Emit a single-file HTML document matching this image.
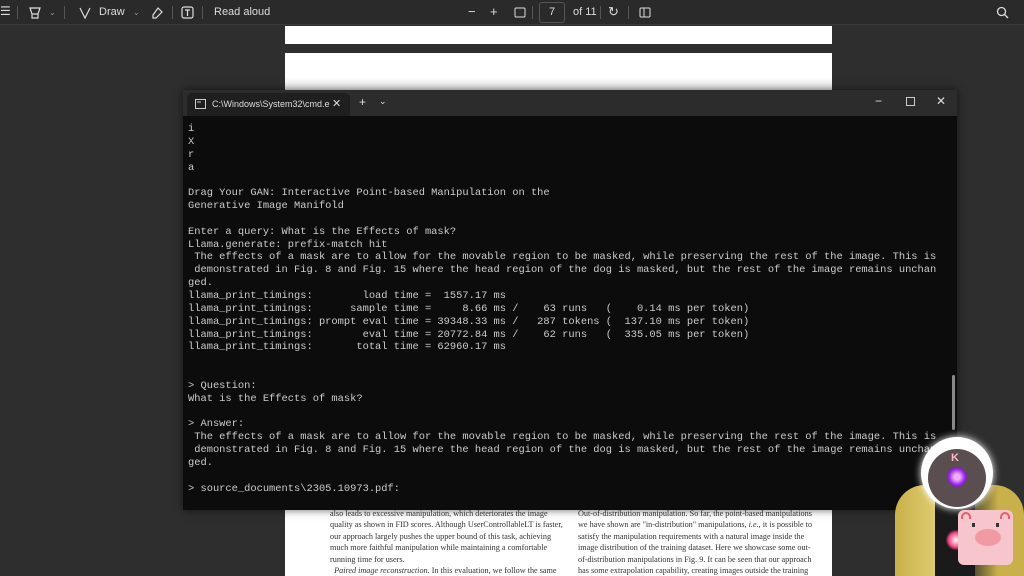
<!DOCTYPE html>
<html><head><meta charset="utf-8"><style>
*{margin:0;padding:0;box-sizing:border-box}
html,body{width:1024px;height:576px;overflow:hidden}
body{background:#2e2e2e;font-family:"Liberation Sans",sans-serif;position:relative}
.tb{position:absolute;left:0;top:0;width:1024px;height:25px;background:#2a2a2a;border-bottom:1px solid #3a3a3a;color:#ddd;font-size:11px}
.tb span{position:absolute;top:6px}
.sep{position:absolute;top:6px;width:1px;height:13px;background:#555}
.page{position:absolute;left:285px;width:547px;background:#fff;overflow:hidden}
.win{position:absolute;left:183px;top:90px;width:774px;height:420px;background:#0c0c0c;box-shadow:0 0 8px rgba(0,0,0,.6);overflow:hidden}
.title{height:26px;background:#2c2c2c;position:relative;color:#ddd;font-size:9px}
.tab{position:absolute;left:4px;top:3px;width:163px;height:23px;background:#1f1f1f;border-radius:5px 5px 0 0}
pre{font-family:"Liberation Mono",monospace;font-size:10.4px;line-height:12.85px;color:#cccccc;position:absolute;left:5px;top:33px}
.ptxt{font-family:"Liberation Serif",serif;font-size:8.2px;line-height:11.4px;color:#333;position:absolute}
</style></head><body>
<div class="tb">
<span style="left:0;font-size:12px;top:4px">☰</span><div class="sep" style="left:17px"></div>
<svg style="position:absolute;left:28px;top:6px" width="14" height="14" fill="none" stroke="#ddd" stroke-width="1.2"><path d="M2 2h10l-2 6H4z M4 8v4h6V8"/></svg>
<span style="left:49px;font-size:8px;top:8px;color:#999">⌄</span><div class="sep" style="left:64px"></div>
<svg style="position:absolute;left:78px;top:6px" width="14" height="14" fill="none" stroke="#ddd" stroke-width="1.2"><path d="M2 2l5 10 5-10"/></svg>
<span style="left:99px">Draw</span><span style="left:133px;font-size:8px;top:8px;color:#999">⌄</span>
<svg style="position:absolute;left:150px;top:6px" width="14" height="14" fill="none" stroke="#ddd" stroke-width="1.2"><path d="M8 2l4 4-6 6H3v-3z"/></svg>
<div class="sep" style="left:172px"></div>
<svg style="position:absolute;left:181px;top:6px" width="13" height="13" fill="none" stroke="#ddd" stroke-width="1.2"><rect x="1" y="1" width="11" height="11" rx="2"/><path d="M4 4h5M6.5 4v6"/></svg>
<div class="sep" style="left:202px"></div>
<span style="left:214px">Read aloud</span>
<span style="left:468px;top:4px;font-size:13px">−</span><span style="left:490px;top:4px;font-size:13px">+</span>
<svg style="position:absolute;left:514px;top:7px" width="12" height="11" fill="none" stroke="#ddd"><rect x="1" y="1" width="10" height="9" rx="1"/></svg>
<div class="sep" style="left:532px"></div>
<div style="position:absolute;left:539px;top:2px;width:26px;height:21px;border:1px solid #555;border-radius:3px;text-align:center;line-height:19px">7</div>
<span style="left:573px">of 11</span><div class="sep" style="left:600px"></div>
<span style="left:608px;top:4px;font-size:13px">↻</span><div class="sep" style="left:628px"></div>
<svg style="position:absolute;left:639px;top:7px" width="12" height="11" fill="none" stroke="#ddd"><rect x="1" y="1" width="10" height="9" rx="1"/><path d="M5 1v9"/></svg>
<svg style="position:absolute;left:996px;top:6px" width="13" height="13" fill="none" stroke="#ddd" stroke-width="1.3"><circle cx="5.5" cy="5.5" r="4"/><path d="M8.5 8.5l3.5 3.5"/></svg>
</div>
<div class="page" style="top:26px;height:18px"></div>
<div class="page" style="top:53px;height:40px;background:linear-gradient(#fff 60%,#ddd)"></div>
<div class="page" style="top:505px;height:71px">
<div class="ptxt" style="left:45px;top:3px;width:236px">also leads to excessive manipulation, which deteriorates the image quality as shown in FID scores. Although UserControllableLT is faster, our approach largely pushes the upper bound of this task, achieving much more faithful manipulation while maintaining a comfortable running time for users.<br>&nbsp;&nbsp;<i>Paired image reconstruction.</i> In this evaluation, we follow the same setting as UserControllableLT [Endo 2022]. Specifically, we</div>
<div class="ptxt" style="left:293px;top:3px;width:236px">Out-of-distribution manipulation. So far, the point-based manipulations we have shown are "in-distribution" manipulations, <i>i.e.</i>, it is possible to satisfy the manipulation requirements with a natural image inside the image distribution of the training dataset. Here we showcase some out-of-distribution manipulations in Fig. 9. It can be seen that our approach has some extrapolation capability, creating images outside the training image distribution, <i>e.g.</i>, an extremely</div>
</div>
<div class="win">
<div class="title"><div class="tab">
<svg style="position:absolute;left:8px;top:6px" width="11" height="10" fill="none" stroke="#ccc"><rect x=".5" y=".5" width="10" height="9"/><path d="M2 3h4"/></svg>
<span style="position:absolute;left:25px;top:6px">C:\Windows\System32\cmd.e</span>
<span style="position:absolute;left:145px;top:4px;font-size:11px">✕</span></div>
<span style="position:absolute;left:176px;top:5px;font-size:12px">+</span>
<span style="position:absolute;left:196px;top:6px;font-size:9px">⌄</span>
<span style="position:absolute;left:692px;top:4px;font-size:12px">−</span>
<div style="position:absolute;left:723px;top:7px;width:9px;height:9px;border:1px solid #ccc"></div>
<span style="position:absolute;left:753px;top:4px;font-size:12px">✕</span>
</div>
<pre>i
X
r
a

Drag Your GAN: Interactive Point-based Manipulation on the
Generative Image Manifold

Enter a query: What is the Effects of mask?
Llama.generate: prefix-match hit
 The effects of a mask are to allow for the movable region to be masked, while preserving the rest of the image. This is
 demonstrated in Fig. 8 and Fig. 15 where the head region of the dog is masked, but the rest of the image remains unchan
ged.
llama_print_timings:        load time =  1557.17 ms
llama_print_timings:      sample time =     8.66 ms /    63 runs   (    0.14 ms per token)
llama_print_timings: prompt eval time = 39348.33 ms /   287 tokens (  137.10 ms per token)
llama_print_timings:        eval time = 20772.84 ms /    62 runs   (  335.05 ms per token)
llama_print_timings:       total time = 62960.17 ms


> Question:
What is the Effects of mask?

> Answer:
 The effects of a mask are to allow for the movable region to be masked, while preserving the rest of the image. This is
 demonstrated in Fig. 8 and Fig. 15 where the head region of the dog is masked, but the rest of the image remains unchan
ged.

> source_documents\2305.10973.pdf:</pre>
<div style="position:absolute;left:769px;top:285px;width:3px;height:55px;background:#888;border-radius:2px"></div>
</div>
<!-- avatar -->
<div style="position:absolute;left:895px;top:485px;width:129px;height:91px;background:linear-gradient(90deg,#c9b04a,#e4d27a 40%,#2a2a2a 55%,#c9b04a 80%);border-radius:30px 30px 0 0"></div>
<div style="position:absolute;left:935px;top:495px;width:40px;height:81px;background:#1a1a1a"></div>
<div style="position:absolute;left:946px;top:530px;width:20px;height:20px;border-radius:50%;background:radial-gradient(#fff,#ff4a8a 50%,transparent 75%)"></div>
<div style="position:absolute;left:921px;top:437px;width:72px;height:72px;border-radius:50%;background:#fff;box-shadow:0 0 8px #fff"></div>
<div style="position:absolute;left:928px;top:449px;width:58px;height:58px;border-radius:50%;background:#5a4e50"></div>
<span style="position:absolute;left:951px;top:452px;color:#ffb8c8;font-weight:bold;font-size:11px">K</span>
<div style="position:absolute;left:947px;top:467px;width:20px;height:20px;border-radius:50%;background:radial-gradient(#f0b0ff 20%,#9a2ae0 55%,#3a1060)"></div>
<div style="position:absolute;left:958px;top:510px;width:55px;height:55px;border-radius:6px;background:#f6c6cc">
<div style="position:absolute;left:17px;top:19px;width:26px;height:17px;border-radius:50%;background:#f19aa3"></div>
<div style="position:absolute;left:14px;top:13px;width:3px;height:4px;background:#333"></div>
<div style="position:absolute;left:38px;top:13px;width:3px;height:4px;background:#333"></div>
<div style="position:absolute;left:3px;top:2px;width:10px;height:7px;border:2px solid #e06070;border-bottom:none;border-radius:8px 8px 0 0"></div>
<div style="position:absolute;left:42px;top:2px;width:10px;height:7px;border:2px solid #e06070;border-bottom:none;border-radius:8px 8px 0 0"></div>
</div>
</body></html>
